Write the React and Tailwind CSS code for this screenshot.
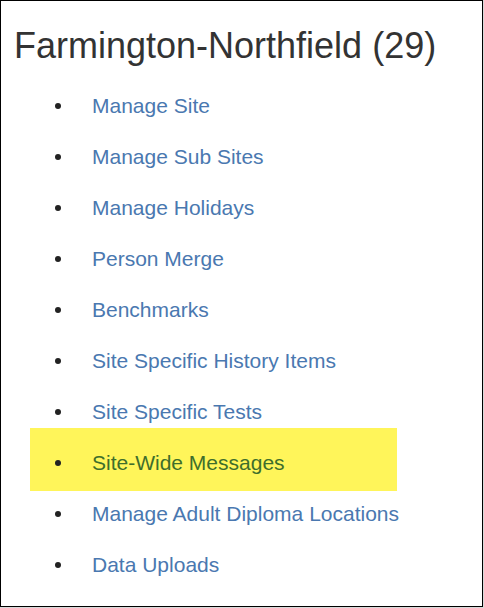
import React from "react";

const items = [
  "Manage Site",
  "Manage Sub Sites",
  "Manage Holidays",
  "Person Merge",
  "Benchmarks",
  "Site Specific History Items",
  "Site Specific Tests",
  "Site-Wide Messages",
  "Manage Adult Diploma Locations",
  "Data Uploads",
];

export default function App() {
  return (
    <div className="w-[484px] h-[608px] bg-[#d9d9d9]" style={{ fontFamily: '"Liberation Sans", Arial, sans-serif' }}>
      <div className="w-[483px] h-[607px] bg-white border border-black flex flex-col">
        <h1 className="text-[36px] leading-[40px] text-[#333333] ml-[13px] mt-[25px] whitespace-nowrap">
          Farmington-Northfield (29)
        </h1>
        <ul className="mt-[14px] flex flex-col">
          {items.map((t, i) =>
            t === "Site-Wide Messages" ? (
              <li
                key={i}
                className="h-[63px] -mt-[9px] -mb-[3px] ml-[29px] w-[367px] bg-[#fff55a] flex items-center pt-[7px]"
              >
                <span className="w-[6px] h-[6px] rounded-full bg-[#222222] ml-[25px]" />
                <span className="ml-[31px] text-[21px] text-[#3e6e2c]">{t}</span>
              </li>
            ) : (
              <li key={i} className="h-[51px] flex items-center">
                <span className="w-[6px] h-[6px] rounded-full bg-[#222222] ml-[54px]" />
                <span className="ml-[31px] text-[21px] text-[#4a78b0]">{t}</span>
              </li>
            )
          )}
        </ul>
      </div>
    </div>
  );
}
